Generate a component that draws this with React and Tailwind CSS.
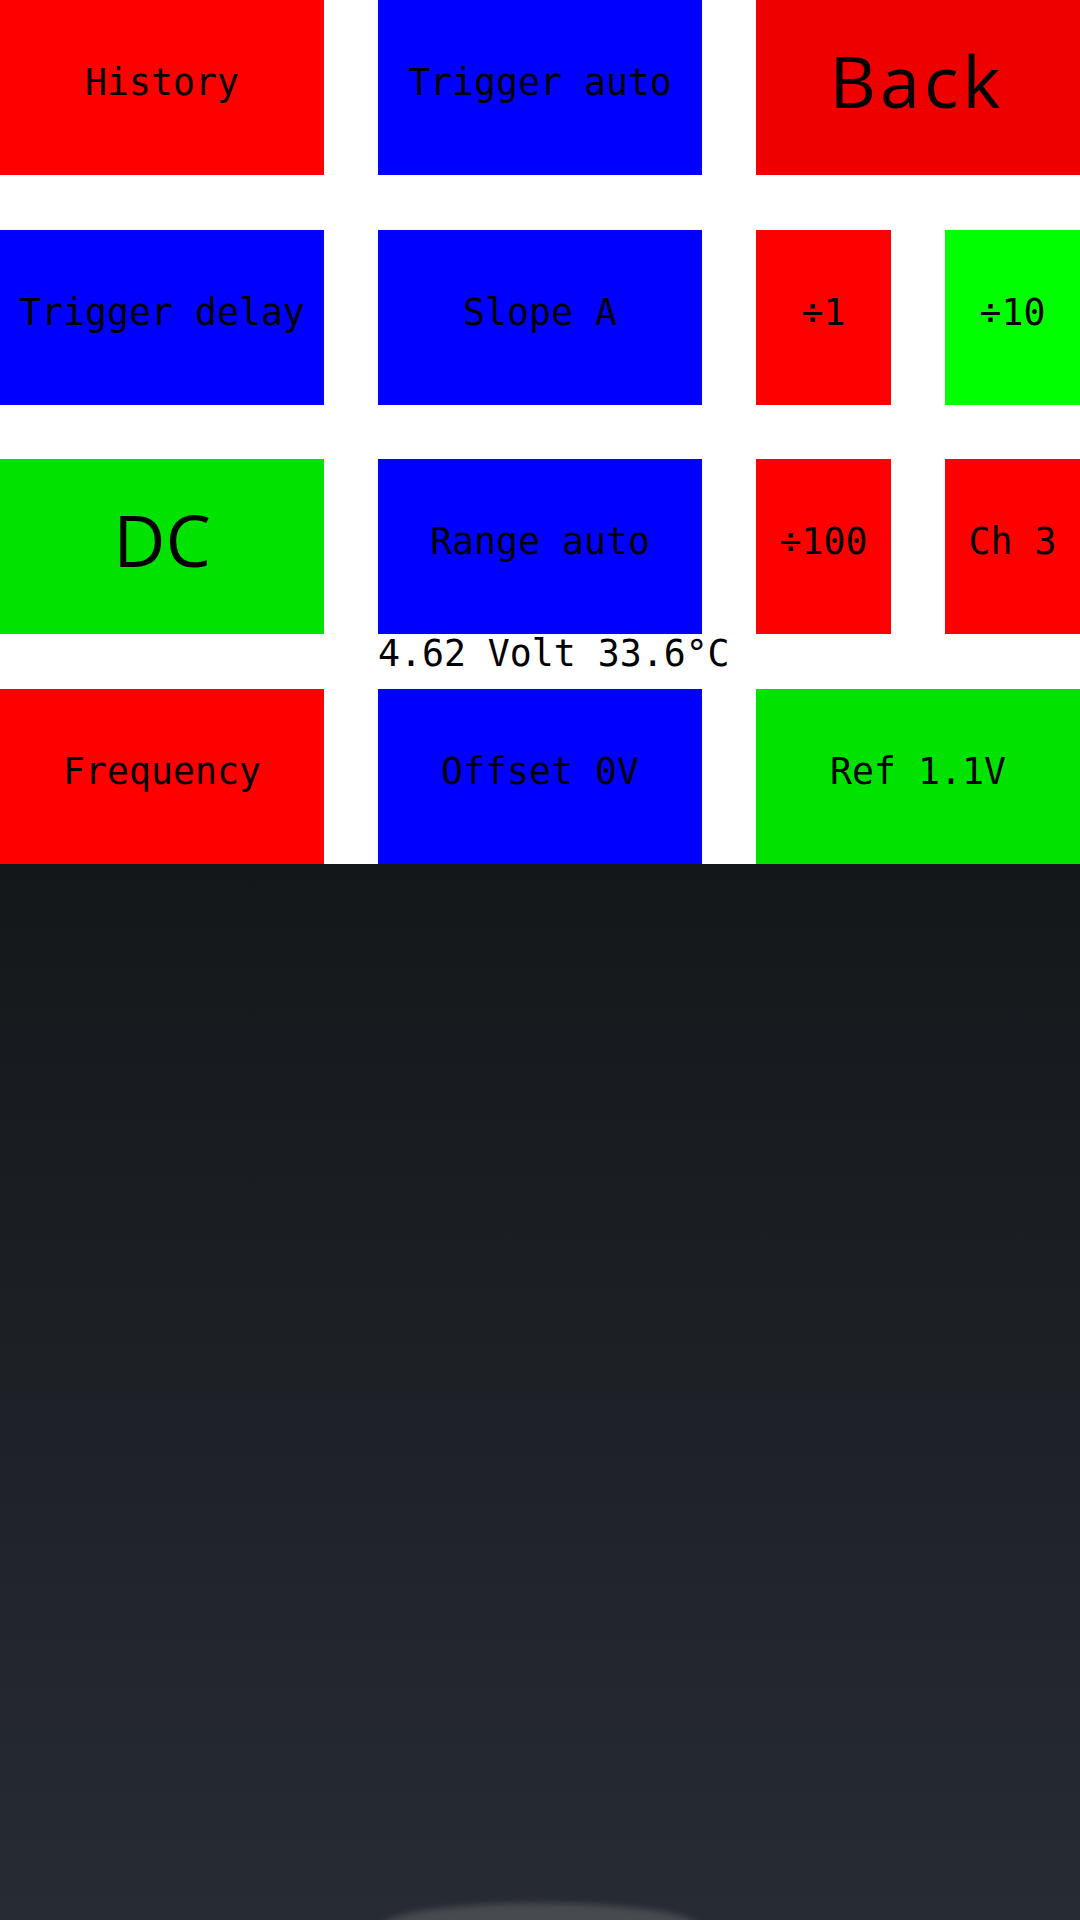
import React from "react";

const mono = "font-['DejaVu_Sans_Mono',monospace] text-[36.5px] text-black";
const big = "font-['Open_Sans',sans-serif] text-[72px] text-black";

function Btn({ color, w = "w-[324px]", children, bigText = false, extra = "" }) {
  return (
    <div
      className={`${w} h-[175px] ${color} flex items-center justify-center whitespace-nowrap ${
        bigText ? `${big} pb-[16px]` : `${mono} pb-[9px]`
      } ${extra}`}
    >
      <span className="leading-none">{children}</span>
    </div>
  );
}

export default function App() {
  return (
    <div className="relative w-[1080px] h-[1920px] overflow-hidden flex flex-col">
      <div className="h-[864px] bg-white flex flex-col">
        <div className="flex gap-[54px]">
          <Btn color="bg-[#ff0000]">History</Btn>
          <Btn color="bg-[#0000ff]">Trigger auto</Btn>
          <Btn color="bg-[#ee0000]" bigText extra="tracking-[4px] pr-[2px]">Back</Btn>
        </div>
        <div className="flex gap-[54px] mt-[55px]">
          <Btn color="bg-[#0000ff]">Trigger delay</Btn>
          <Btn color="bg-[#0000ff]">Slope A</Btn>
          <div className="flex gap-[54px]">
            <Btn color="bg-[#ff0000]" w="w-[135px]">÷1</Btn>
            <Btn color="bg-[#00ff00]" w="w-[135px]">÷10</Btn>
          </div>
        </div>
        <div className="flex gap-[54px] mt-[54px]">
          <Btn color="bg-[#00e200]" bigText>DC</Btn>
          <Btn color="bg-[#0000ff]">Range auto</Btn>
          <div className="flex gap-[54px]">
            <Btn color="bg-[#ff0000]" w="w-[135px]">÷100</Btn>
            <Btn color="bg-[#ff0000]" w="w-[135px]">Ch 3</Btn>
          </div>
        </div>
        <div className="h-[55px] pl-[378px]">
          <span className={`${mono} block leading-[39px] whitespace-nowrap`}>4.62 Volt 33.6°C</span>
        </div>
        <div className="flex gap-[54px]">
          <Btn color="bg-[#ff0000]">Frequency</Btn>
          <Btn color="bg-[#0000ff]">Offset 0V</Btn>
          <Btn color="bg-[#00e200]">Ref 1.1V</Btn>
        </div>
      </div>
      <div className="flex-1 bg-linear-to-b from-[#14171a] to-[#272b34]" />
      <div className="absolute left-[380px] w-[320px] h-[50px] bottom-[-33px] rounded-[50%] bg-[#474b4f] blur-[3px]" />
    </div>
  );
}
